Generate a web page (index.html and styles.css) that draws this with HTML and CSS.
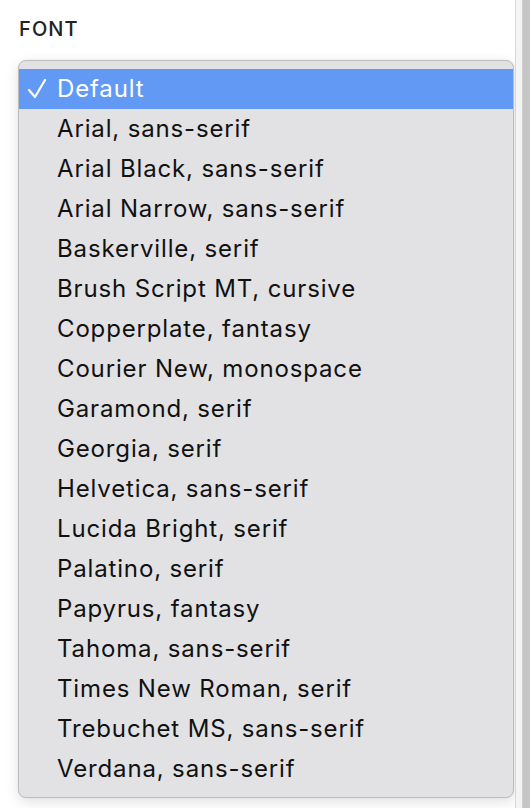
FILE: index.html
```html
<!DOCTYPE html>
<html>
<head>
<meta charset="utf-8">
<link rel="stylesheet" href="styles.css">
</head>
<body>
<div class="page">
  <div class="content">
    <div class="label">FONT</div>
    <ul class="menu">
      <li class="item selected"><svg class="check" width="20" height="20" viewBox="0 0 20 20"><path d="M2 11 L8 18 L18 1" fill="none" stroke="#ffffff" stroke-width="2.2" stroke-linecap="round" stroke-linejoin="round"/></svg>Default</li>
      <li class="item">Arial, sans-serif</li>
      <li class="item">Arial Black, sans-serif</li>
      <li class="item">Arial Narrow, sans-serif</li>
      <li class="item">Baskerville, serif</li>
      <li class="item">Brush Script MT, cursive</li>
      <li class="item">Copperplate, fantasy</li>
      <li class="item">Courier New, monospace</li>
      <li class="item">Garamond, serif</li>
      <li class="item">Georgia, serif</li>
      <li class="item">Helvetica, sans-serif</li>
      <li class="item">Lucida Bright, serif</li>
      <li class="item">Palatino, serif</li>
      <li class="item">Papyrus, fantasy</li>
      <li class="item">Tahoma, sans-serif</li>
      <li class="item">Times New Roman, serif</li>
      <li class="item">Trebuchet MS, sans-serif</li>
      <li class="item">Verdana, sans-serif</li>
    </ul>
  </div>
  <div class="scroll"><div class="scroll-inner"></div></div>
</div>
</body>
</html>
```
FILE: styles.css
```css
html, body {
  margin: 0;
  padding: 0;
  background: #ffffff;
  font-family: Inter, "Liberation Sans", sans-serif;
}
.page {
  display: flex;
  width: 530px;
  height: 808px;
  overflow: hidden;
}
.content {
  flex: 1;
  padding: 18px 1px 0 18px;
}
.label {
  font-size: 20px;
  font-weight: 500;
  letter-spacing: 1.1px;
  color: #222222;
  height: 42px;
  line-height: 22px;
  padding-left: 1px;
}
.menu {
  list-style: none;
  margin: 0;
  padding: 8px 0;
  background: #e2e2e4;
  border: 1px solid #bdbdbf;
  border-radius: 8px;
  box-shadow: 0 4px 14px rgba(0, 0, 0, 0.12), 0 0 2px rgba(0, 0, 0, 0.08);
}
.item {
  height: 40px;
  line-height: 40px;
  padding-left: 38px;
  font-size: 24px;
  letter-spacing: 0.85px;
  color: #111111;
  white-space: nowrap;
  position: relative;
}
.item.selected {
  background: #6199f4;
  color: #ffffff;
}
.check {
  position: absolute;
  left: 8px;
  top: 10px;
}
.scroll {
  width: 14px;
  display: flex;
  border-left: 1px solid #d8d8d8;
  background: #f4f4f4;
}
.scroll-inner {
  margin-left: 6px;
  flex: 1;
  background: #c6c6c6;
  border-left: 1px solid #d0d0d0;
}
```
